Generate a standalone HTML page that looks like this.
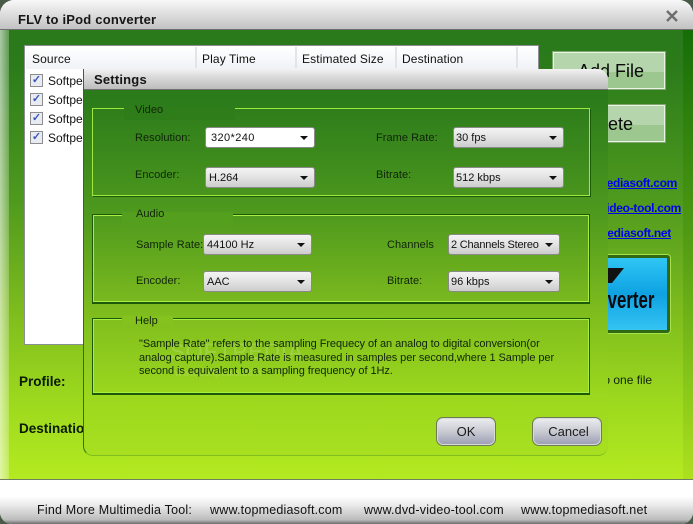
<!DOCTYPE html>
<html><head><meta charset="utf-8"><style>
html,body{margin:0;padding:0}
body{width:693px;height:524px;overflow:hidden;position:relative;background:#4a5a48;font-family:"Liberation Sans",sans-serif;color:#111}
div,span,a,svg{position:absolute;white-space:nowrap;box-sizing:border-box}
.t{font-size:11px;line-height:14px;color:#10250a;letter-spacing:.05px}
.sel{height:21px;border:1px solid #8a8a8a;border-radius:3px;background:linear-gradient(#f4f4f4,#e4e4e4 45%,#cdcdcd);font-size:11px;line-height:20px;padding-left:3px;color:#111}
.sel:after{content:"";position:absolute;right:6px;top:8px;border-left:4px solid transparent;border-right:4px solid transparent;border-top:4px solid #111}
.grp{left:92px;width:498px}
.gv{border:1px solid #9fe83c;box-shadow:1px 1px 0 #1c5a0a}
.ga{border:1px solid #1c5a0a;border-bottom-width:2px;box-shadow:inset 1px 1px 0 #a9ee42,inset -1px -1px 0 #a9ee42}
.chk{left:30px;width:13px;height:13px;border:1px solid #8d8d8d;background:#e8ecf2;color:#3a55b8;font-size:11px;line-height:11px;text-align:center;font-weight:bold}
.row{left:48px;font-size:12px;line-height:14px;color:#111}
.h{top:52px;font-size:12px;line-height:14px;color:#111;letter-spacing:.12px}
.sep{top:47px;width:2px;height:21px;background:#e2e4e8}
.b{font-weight:bold;font-size:13.5px;line-height:16px;color:#0a1a05}
.lk{color:#0000ee;font-size:12px;line-height:14px;text-decoration:underline;font-weight:bold;letter-spacing:-.3px}
.btn{border:1px solid #eaf3e4;outline:1px solid #7fa86e;background:linear-gradient(#b5d6ac 0,#b5d6ac 55%,#9cc78f 55%,#9cc78f);font-size:18px;line-height:37px;color:#0a0a0a}
.ok{top:417px;height:29px;border:1px solid #6d7a55;border-radius:7px;background:linear-gradient(#eceef0,#c8cad2 50%,#9a9db2);font-size:13px;line-height:28px;text-align:center;color:#1a1a1a;box-shadow:inset 0 0 0 1px #d8dcd8}
.ft{top:503px;font-size:12.5px;line-height:15px;color:#111;letter-spacing:.2px}
</style></head><body>

<!-- window frame -->
<div style="left:0;top:0;width:693px;height:524px;background:#fff;border-radius:14px 14px 12px 12px;overflow:hidden">
  <div style="left:0;top:0;width:693px;height:30px;background:linear-gradient(#f8f8f8,#e8e8e8 30%,#c2c2c2);border-bottom:1px solid #6f6f6f"></div>
  <div style="left:0;top:30px;width:693px;height:450px;background:linear-gradient(#2a7a1b 0,#2b7b1b 8%,#4f9a1e 38%,#7dbb1e 62%,#9cd81e 82%,#b4ea21 100%)"></div>
  <div style="left:0;top:30px;width:9px;height:450px;background:linear-gradient(90deg,rgba(255,255,255,.6),rgba(255,255,255,.25))"></div>
  <div style="left:683px;top:30px;width:10px;height:450px;background:linear-gradient(#156d08,#4f9a14 45%,#8ac81a 80%,#aee020)"></div>
  <div style="left:0;top:479px;width:693px;height:1px;background:#6f7d60"></div>
  <div style="left:0;top:496px;width:693px;height:28px;background:linear-gradient(#fff,#ececec 30%,#bcbcbc 85%,#6b6b6b)"></div>
</div>

<div style="left:18px;top:12px;font-size:13px;line-height:16px;font-weight:bold;color:#161616;letter-spacing:.2px">FLV to iPod converter</div>
<svg style="left:666px;top:10px" width="12" height="12" viewBox="0 0 12 12"><path d="M1 1L11 11M11 1L1 11" stroke="#6e6e6e" stroke-width="2.4" fill="none"/></svg>

<!-- list -->
<div style="left:24px;top:45px;width:515px;height:300px;background:#fff;border:1px solid #8b8f93">
  <div style="left:1px;top:1px;width:512px;height:22px;background:linear-gradient(#fff,#f0f2f6)"></div>
</div>
<div class="sep" style="left:195px"></div><div class="sep" style="left:295px"></div><div class="sep" style="left:395px"></div><div class="sep" style="left:516px"></div>
<div class="h" style="left:32px">Source</div>
<div class="h" style="left:202px">Play Time</div>
<div class="h" style="left:302px">Estimated Size</div>
<div class="h" style="left:402px">Destination</div>
<div class="chk" style="top:74px">✓</div><div class="row" style="top:74px">Softpe</div>
<div class="chk" style="top:93px">✓</div><div class="row" style="top:93px">Softpe</div>
<div class="chk" style="top:112px">✓</div><div class="row" style="top:112px">Softpe</div>
<div class="chk" style="top:131px">✓</div><div class="row" style="top:131px">Softpe</div>

<!-- right side -->
<div class="btn" style="left:553px;top:52px;width:112px;height:37px;padding-left:24px">Add File</div>
<div class="btn" style="left:553px;top:105px;width:112px;height:37px;padding-left:27px">Delete</div>
<a class="lk" style="right:16px;top:176px">www.topmediasoft.com</a>
<a class="lk" style="right:12px;top:201px">www.dvd-video-tool.com</a>
<a class="lk" style="right:22px;top:226px">www.topmediasoft.net</a>
<div style="left:560px;top:255px;width:110px;height:78px;border:3px solid #2f6a12;border-radius:3px;background:linear-gradient(#2fc6f4,#0ea2e2 50%,#35c4f2);box-shadow:0 0 0 1px #a8e050"></div>
<div style="left:600px;top:268px;width:0;height:0;border-left:12px solid #111;border-right:12px solid transparent;border-top:15px solid #111"></div>
<div style="right:39px;top:289px;font-size:24px;line-height:24px;font-weight:bold;color:#08080f;transform:scaleX(.7);transform-origin:right center">Converter</div>
<div style="left:600px;top:373px;font-size:12px;line-height:14px;color:#10250a">to one file</div>

<div class="b" style="left:19px;top:374px">Profile:</div>
<div class="b" style="left:19px;top:421px">Destination:</div>

<!-- dialog -->
<div style="left:83px;top:69px;width:525px;height:387px;border-radius:0 10px 10px 10px;overflow:hidden;background:linear-gradient(#2b7b1b 0,#2b7b1b 8%,#4f9a1e 38%,#7dbb1e 62%,#9cd81e 85%,#a8e020 100%);border-left:1px solid #2e6f16;border-bottom:1px solid #7fbe1e">
  <div style="left:0;top:0;width:525px;height:21px;background:linear-gradient(#f2f2f2,#dcdcdc 35%,#bcbcbc);border-bottom:1px solid #6f6f6f"></div>
</div>
<div style="left:94px;top:72px;font-size:13px;line-height:15px;font-weight:bold;color:#161616;letter-spacing:.2px">Settings</div>

<!-- Video -->
<div class="grp gv" style="top:108px;height:88px"></div>
<div style="left:124px;top:107px;width:111px;height:13px;background:#2f7d1a"></div>
<div class="t" style="left:135px;top:103px">Video</div>
<div class="t" style="left:135px;top:131px">Resolution:</div>
<div class="t" style="left:135px;top:168px">Encoder:</div>
<div class="t" style="left:376px;top:131px">Frame Rate:</div>
<div class="t" style="left:376px;top:168px">Bitrate:</div>
<div class="sel" style="left:205px;top:127px;width:110px;background:#fff;padding-left:5px;letter-spacing:.4px">320*240</div>
<div class="sel" style="left:205px;top:167px;width:110px">H.264</div>
<div class="sel" style="left:453px;top:127px;width:111px;padding-left:2px">30 fps</div>
<div class="sel" style="left:453px;top:167px;width:111px;padding-left:2px">512 kbps</div>

<!-- Audio -->
<div class="grp ga" style="top:214px;height:90px"></div>
<div style="left:122px;top:212px;width:111px;height:15px;background:#54a01e"></div>
<div class="t" style="left:136px;top:207px">Audio</div>
<div class="t" style="left:136px;top:238px">Sample Rate:</div>
<div class="t" style="left:136px;top:274px">Encoder:</div>
<div class="t" style="left:387px;top:238px">Channels</div>
<div class="t" style="left:387px;top:274px">Bitrate:</div>
<div class="sel" style="left:203px;top:234px;width:109px">44100 Hz</div>
<div class="sel" style="left:203px;top:271px;width:109px">AAC</div>
<div class="sel" style="left:448px;top:234px;width:112px;padding-left:2px;letter-spacing:-.2px">2 Channels Stereo</div>
<div class="sel" style="left:448px;top:271px;width:112px;padding-left:2px">96 kbps</div>

<!-- Help -->
<div class="grp ga" style="top:318px;height:77px"></div>
<div style="left:122px;top:316px;width:51px;height:8px;background:#85c21e"></div>
<div class="t" style="left:135px;top:314px">Help</div>
<div style="left:170px;top:340px;font-size:22px;line-height:24px;color:#fff;opacity:.16;letter-spacing:1px">SOFTPEDIA</div>
<div style="left:175px;top:368px;font-size:10px;line-height:12px;color:#fff;opacity:.16">www.softpedia.com</div>
<div class="t" style="left:139px;top:338px;line-height:13.5px;letter-spacing:-.07px;white-space:pre">"Sample Rate" refers to the sampling Frequecy of an analog to digital conversion(or
analog capture).Sample Rate is measured in samples per second,where 1 Sample per
second is equivalent to a sampling frequency of 1Hz.</div>

<div class="ok" style="left:436px;width:60px">OK</div>
<div class="ok" style="left:532px;width:70px;padding-left:3px">Cancel</div>

<!-- footer -->
<div class="ft" style="left:37px">Find More Multimedia Tool:</div>
<div class="ft" style="left:210px">www.topmediasoft.com</div>
<div class="ft" style="left:364px">www.dvd-video-tool.com</div>
<div class="ft" style="left:521px">www.topmediasoft.net</div>
</body></html>
